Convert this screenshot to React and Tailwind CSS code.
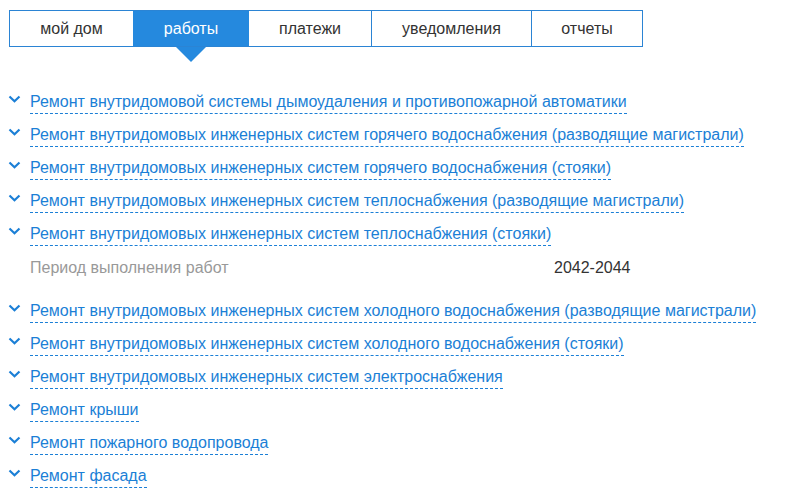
import { useState } from 'react';

const tabs = [
  { label: 'мой дом', w: 'w-[123px]' },
  { label: 'работы', w: 'w-[116px]' },
  { label: 'платежи', w: 'w-[122px]' },
  { label: 'уведомления', w: 'w-[160px]' },
  { label: 'отчеты', w: 'w-[111px]' },
];

const works = [
  { title: 'Ремонт внутридомовой системы дымоудаления и противопожарной автоматики' },
  { title: 'Ремонт внутридомовых инженерных систем горячего водоснабжения (разводящие магистрали)' },
  { title: 'Ремонт внутридомовых инженерных систем горячего водоснабжения (стояки)' },
  { title: 'Ремонт внутридомовых инженерных систем теплоснабжения (разводящие магистрали)' },
  { title: 'Ремонт внутридомовых инженерных систем теплоснабжения (стояки)', period: '2042-2044' },
  { title: 'Ремонт внутридомовых инженерных систем холодного водоснабжения (разводящие магистрали)' },
  { title: 'Ремонт внутридомовых инженерных систем холодного водоснабжения (стояки)' },
  { title: 'Ремонт внутридомовых инженерных систем электроснабжения' },
  { title: 'Ремонт крыши' },
  { title: 'Ремонт пожарного водопровода' },
  { title: 'Ремонт фасада' },
];

function Chevron() {
  return (
    <svg width="13" height="8" viewBox="0 0 13 8" className="shrink-0 -translate-y-[5px]">
      <polyline points="1.5,1.5 6.5,6.2 11.5,1.5" fill="none" stroke="#1b7fd6" strokeWidth="2.2" />
    </svg>
  );
}

export default function App() {
  const [active, setActive] = useState(1);
  const [open, setOpen] = useState(4);

  return (
    <div className="bg-white min-h-[500px] font-['Liberation_Sans',Arial,sans-serif]">
      <div className="pt-[10px] pl-[9px]">
        <div className="flex h-[37px] border border-[#2b84d4] w-fit">
          {tabs.map((t, i) => (
            <button
              key={t.label}
              onClick={() => setActive(i)}
              className={`relative ${t.w} h-full text-[16px] ${i > 0 && i !== active && i - 1 !== active ? 'border-l border-[#2b84d4]' : ''} ${
                i === active ? 'bg-[#2589de] text-white' : 'text-[#333]'
              }`}
            >
              {t.label}
              {i === active && (
                <span className="absolute left-1/2 -translate-x-1/2 top-full mt-px w-0 h-0 border-l-[15px] border-r-[15px] border-t-[15px] border-l-transparent border-r-transparent border-t-[#2589de]" />
              )}
            </button>
          ))}
        </div>
      </div>

      <ul className="mt-[40px]">
        {works.map((w, i) => (
          <li key={w.title}>
            <div
              className="flex items-center h-[33px] pl-[8px] gap-[9px] cursor-pointer"
              onClick={() => setOpen(open === i ? -1 : i)}
            >
              <Chevron />
              <span className="text-[16px] text-[#1b7fd6] leading-[18px] pb-[2px] border-b border-dashed border-[#1b7fd6]">
                {w.title}
              </span>
            </div>
            {open === i && w.period && (
              <div className="flex items-center h-[31px] mb-[13px] pl-[30px] text-[16px]">
                <span className="w-[524px] text-[#999]">Период выполнения работ</span>
                <span className="text-[#333]">{w.period}</span>
              </div>
            )}
          </li>
        ))}
      </ul>
    </div>
  );
}
